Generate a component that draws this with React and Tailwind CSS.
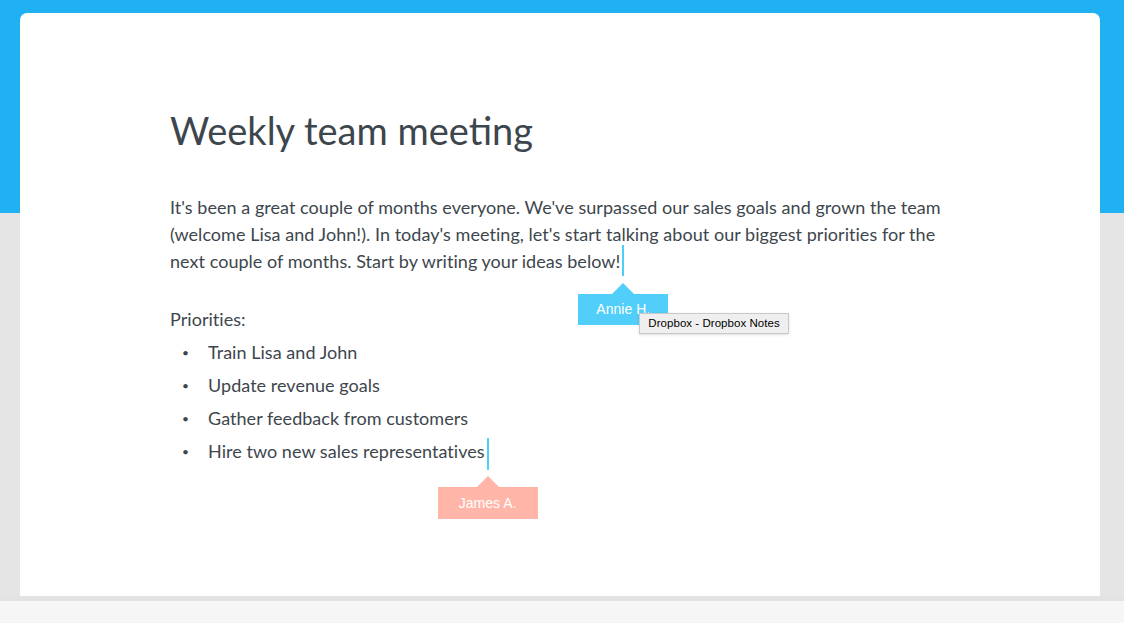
import React from "react";

function Cursor({ labelColor, lineTop, lineH, labelTop, children }) {
  return (
    <span className="relative inline-block w-[5px] h-[27px] align-top">
      <span
        className="absolute left-[2px] w-[2px] bg-[#4fcff7]"
        style={{ top: lineTop, height: lineH }}
      ></span>
      <span
        className="absolute left-[3px] -translate-x-1/2 flex flex-col items-center"
        style={{ top: labelTop }}
      >
        <span
          className={`w-0 h-0 border-l-[11px] border-r-[11px] border-b-[11px] border-l-transparent border-r-transparent ${labelColor}`}
        ></span>
        {children}
      </span>
    </span>
  );
}

const sans = { fontFamily: "'Liberation Sans', Arial, sans-serif" };

export default function App() {
  const items = [
    "Train Lisa and John",
    "Update revenue goals",
    "Gather feedback from customers",
  ];

  return (
    <div
      className="w-[1124px] h-[623px] flex flex-col bg-[linear-gradient(to_bottom,#1fb1f2_213px,#e5e5e5_213px)] overflow-hidden"
      style={{ fontFamily: "Lato, 'Liberation Sans', sans-serif" }}
    >
      <div className="ml-[20px] mr-[24px] mt-[13px] h-[583px] bg-white rounded-t-[7px] pl-[150px] pt-[94px] text-[#3d464d]">
        <h1 className="text-[38px] leading-[46px]">Weekly team meeting</h1>

        <p className="mt-[41px] text-[18px] leading-[27px] tracking-[0.04px] whitespace-nowrap">
          It's been a great couple of months everyone. We've surpassed our sales goals and grown the team
          <br />
          (welcome Lisa and John!). In today's meeting, let's start talking about our biggest priorities for the
          <br />
          next couple of months. Start by writing your ideas below!
          <Cursor labelColor="border-b-[#52cefa]" lineTop={-3} lineH={31} labelTop={35}>
            <span
              className="relative bg-[#52cefa] text-white text-[14px] leading-[31px] w-[90px] text-center block"
              style={sans}
            >
              Annie H.
              <span className="absolute left-[61px] top-[19px] bg-[#efefef] border border-[#c9c9c9] shadow-sm text-black text-[11.5px] leading-[19px] px-[8px] whitespace-nowrap">
                Dropbox - Dropbox Notes
              </span>
            </span>
          </Cursor>
        </p>

        <p className="mt-[31px] text-[18px] leading-[27px] tracking-[0.04px]">Priorities:</p>
        <ul className="mt-[3px] text-[18px] leading-[27px] tracking-[0.04px]">
          {items.map((t) => (
            <li key={t} className="flex items-center h-[33px]">
              <span className="w-[38px] pl-[12px] text-[12px]">•</span>
              <span>{t}</span>
            </li>
          ))}
          <li className="flex items-center h-[33px]">
            <span className="w-[38px] pl-[12px] text-[12px]">•</span>
            <span className="whitespace-nowrap">
              Hire two new sales representatives
              <Cursor labelColor="border-b-[#ffb6a8]" lineTop={0} lineH={32} labelTop={38}>
                <span
                  className="bg-[#ffb6a8] text-white text-[14px] leading-[32px] w-[100px] text-center block"
                  style={sans}
                >
                  James A.
                </span>
              </Cursor>
            </span>
          </li>
        </ul>
      </div>
      <div className="h-[5px] bg-[#e3e3e3]"></div>
      <div className="flex-1 bg-[#f6f6f6]"></div>
    </div>
  );
}
